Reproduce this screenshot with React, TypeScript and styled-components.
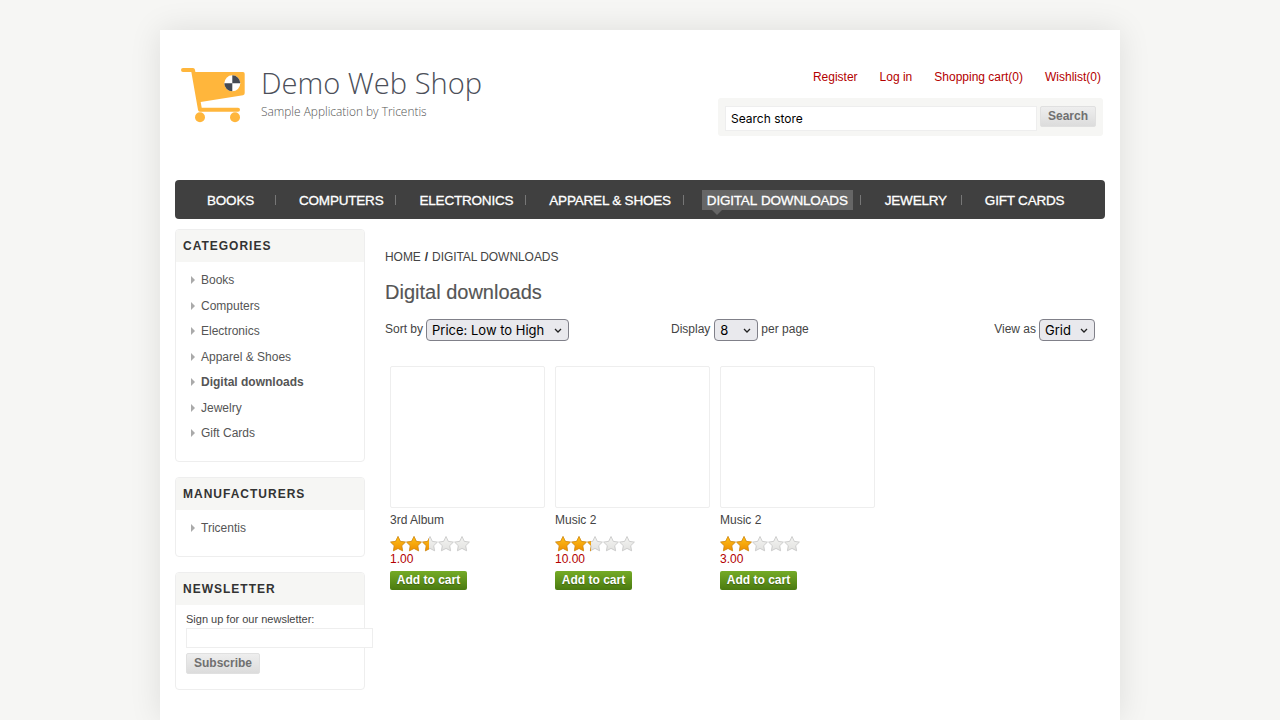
import React from "react";
import styled, { createGlobalStyle } from "styled-components";

const Global = createGlobalStyle`
  html, body { margin: 0; padding: 0; height: 100%; overflow: hidden; background: #f6f6f4; }
  body { font-family: "Liberation Sans", Arial, sans-serif; font-size: 12px; color: #444; }
  * { box-sizing: border-box; }
`;

const Master = styled.div`
  width: 960px;
  height: 690px;
  margin: 30px auto 0;
  padding: 0 15px;
  background: #fff;
  box-shadow: 0 0 30px rgba(0, 0, 0, 0.1);
`;

const Header = styled.header`
  height: 150px;
  display: flex;
  justify-content: space-between;
`;

const LogoLink = styled.a`
  display: flex;
  align-items: flex-start;
  padding: 36px 0 0 5px;
  gap: 13px;
`;

const LogoTextBox = styled.div`
  display: flex;
  flex-direction: column;
`;

const LogoName = styled.span`
  font-family: "Open Sans", sans-serif;
  font-weight: 300;
  font-size: 29.1px;
  line-height: 34px;
  color: #4c4f59;
`;

const LogoTagline = styled.span`
  font-family: "Open Sans", sans-serif;
  font-weight: 300;
  font-size: 11.9px;
  line-height: 16px;
  margin-top: 3px;
  color: #555;
`;

const HeaderRight = styled.div`
  width: 385px;
  margin-right: 2px;
  padding-top: 40px;
  display: flex;
  flex-direction: column;
  align-items: flex-end;
`;

const HeaderLinks = styled.div`
  display: flex;
  gap: 22px;
  height: 14px;
  line-height: 14px;
  margin-right: 2px;
`;

const HeaderLink = styled.a`
  color: #b40000;
  font-size: 12px;
`;

const SearchBar = styled.div`
  width: 385px;
  height: 38px;
  margin-top: 14px;
  padding: 8px 7px;
  display: flex;
  align-items: flex-start;
  gap: 3px;
  border-radius: 3px;
  background: #f6f6f4;
`;

const SearchInput = styled.input`
  width: 312px;
  height: 25px;
  padding: 0 5px;
  border: 1px solid #eee;
  background: #fff;
  font-family: Inter, sans-serif;
  font-size: 12px;
  color: #000;
  outline: none;
  &::placeholder { color: #000; opacity: 1; }
`;

const GreyButton = styled.button<{ $w: number }>`
  width: ${(p) => p.$w}px;
  height: 21px;
  padding: 0 0 2px;
  border: 1px solid #e0e0e0;
  border-radius: 2px;
  background: linear-gradient(#eeeeee, #dcdcdc);
  font-family: "Liberation Sans", sans-serif;
  font-size: 12px;
  font-weight: 700;
  color: #707070;
`;

const Nav = styled.nav`
  height: 39px;
  display: flex;
  align-items: center;
  padding-left: 8px;
  border-radius: 4px;
  background: #404040;
`;

const NavItem = styled.div<{ $pl?: number; $pr?: number; $last?: boolean }>`
  position: relative;
  display: flex;
  align-items: center;
  height: 20px;
  padding: 0 ${(p) => p.$pr ?? 12}px 0 ${(p) => p.$pl ?? 24}px;
  &::after {
    content: "";
    display: ${(p) => (p.$last ? "none" : "block")};
    position: absolute;
    right: -1px;
    top: 5px;
    width: 1px;
    height: 10px;
    background: #777;
  }
`;

const NavLink = styled.a<{ $active?: boolean }>`
  position: relative;
  display: block;
  height: 20px;
  line-height: 21px;
  padding: 0 5px;
  margin: 0 -5px;
  font-size: 13.5px;
  letter-spacing: -0.2px;
  word-spacing: ${(p) => (p.$active ? 1 : 0)}px;
  color: #fff;
  -webkit-text-stroke: 0.3px #fff;
  background: ${(p) => (p.$active ? "#666" : "transparent")};
  &::after {
    content: "";
    display: ${(p) => (p.$active ? "block" : "none")};
    position: absolute;
    left: 10px;
    top: 20px;
    border: 5px solid transparent;
    border-top-color: #666;
    border-bottom: 0;
  }
`;

const Body = styled.div`
  display: flex;
  gap: 20px;
  margin-top: 10px;
`;

const Side = styled.aside`
  width: 190px;
  display: flex;
  flex-direction: column;
  gap: 15px;
`;

const Block = styled.section<{ $h: number }>`
  height: ${(p) => p.$h}px;
  border: 1px solid #eee;
  border-radius: 4px;
`;

const BlockTitle = styled.div`
  height: 32px;
  padding-left: 7px;
  line-height: 32px;
  background: #f6f6f4;
  font-size: 12px;
  font-weight: 700;
  letter-spacing: 1px;
  color: #333;
  border-radius: 3px 3px 0 0;
`;

const SideList = styled.ul`
  list-style: none;
  margin: 0;
  padding: 5.4px 0 0 15px;
`;

const SideItem = styled.li<{ $active?: boolean }>`
  display: flex;
  align-items: center;
  height: 25.5px;
  gap: 6px;
  font-size: 12px;
  color: #555;
  font-weight: ${(p) => (p.$active ? 700 : 400)};
  &::before {
    content: "";
    border-left: 4px solid #aaa;
    border-top: 4.5px solid transparent;
    border-bottom: 4.5px solid transparent;
  }
`;

const NewsBody = styled.div`
  padding: 7px 0 0 10px;
`;

const NewsLabel = styled.div`
  height: 14px;
  line-height: 14px;
  font-size: 11px;
  color: #444;
`;

const NewsInput = styled.input`
  display: block;
  width: 187px;
  height: 20px;
  margin: 2px 0 5px;
  border: 1px solid #eee;
  background: #fff;
  outline: none;
`;

const Main = styled.main`
  width: 720px;
  padding-top: 21px;
`;

const Crumb = styled.div`
  height: 14px;
  line-height: 14px;
  font-size: 12px;
  letter-spacing: -0.005em;
  color: #444;
  text-transform: uppercase;
  & b { font-weight: 700; font-size: 12px; color: #333; margin: 0 4px 0 4px; }
`;

const PageTitle = styled.h1`
  margin: 16px 0 0;
  height: 24px;
  line-height: 24px;
  font-size: 20px;
  font-weight: 400;
  color: #555;
  -webkit-text-stroke: 0.15px #555;
`;

const Filters = styled.div`
  display: grid;
  grid-template-columns: 286px 1fr auto;
  margin-top: 14px;
  height: 22px;
  padding-right: 10px;
`;

const Filter = styled.div`
  display: flex;
  align-items: center;
  gap: 3px;
  height: 22px;
  font-size: 12px;
  color: #444;
`;

const SelectWrap = styled.div<{ $w: number; $ml?: number }>`
  position: relative;
  align-self: flex-start;
  flex: none;
  width: ${(p) => p.$w}px;
  height: 22px;
  margin: 1px 0 -1px ${(p) => p.$ml ?? 0}px;
  & svg {
    position: absolute;
    right: 7px;
    top: 9px;
    pointer-events: none;
  }
`;

const Select = styled.select`
  appearance: none;
  display: block;
  width: 100%;
  height: 22px;
  padding: 0 0 0 5px;
  font-family: Inter, sans-serif;
  font-size: 13px;
  color: #000;
  background-color: #e9e9ed;
  border: 1px solid #808089;
  border-radius: 4px;
  outline: none;
`;

const Grid = styled.div`
  display: flex;
  gap: 10px;
  margin-top: 26px;
  padding-left: 5px;
`;

const Product = styled.article`
  width: 155px;
  display: flex;
  flex-direction: column;
  align-items: flex-start;
`;

const Picture = styled.div`
  width: 155px;
  height: 142px;
  border: 1px solid #eee;
  border-radius: 2px;
`;

const ProductTitle = styled.div`
  margin-top: 5px;
  height: 14px;
  line-height: 14px;
  font-size: 12px;
  color: #444;
`;

const RatingBox = styled.div`
  position: relative;
  width: 80px;
  height: 16px;
  margin-top: 9px;
`;

const RatingFill = styled.div`
  position: absolute;
  left: 0;
  top: 0;
  height: 16px;
  overflow: hidden;
`;

const Price = styled.div`
  height: 14px;
  line-height: 14px;
  font-size: 12px;
  color: #b40000;
`;

const CartButton = styled.button`
  width: 77px;
  height: 19px;
  margin-top: 5px;
  padding: 0 0 1px;
  border: 0;
  border-radius: 2px;
  background: linear-gradient(#75ab26, #4a7a10);
  font-family: "Liberation Sans", sans-serif;
  font-size: 12px;
  font-weight: 700;
  color: #fff;
  text-shadow: 0 1px 1px rgba(0, 0, 0, 0.3);
`;

const STAR = "M8 .5 L10.3 5.35 L15.4 6.1 L11.7 9.7 L12.6 14.8 L8 12.4 L3.4 14.8 L4.3 9.7 L.6 6.1 L5.7 5.35 Z";

function StarRow({ gold }: { gold: boolean }) {
  return (
    <svg width="80" height="16" viewBox="0 0 80 16" style={{ display: "block" }}>
      <defs>
        <linearGradient id={gold ? "gs" : "gg"} x1="0" y1="0" x2="0" y2="1">
          <stop offset="0" stopColor={gold ? "#ffc21a" : "#f4f4f2"} />
          <stop offset="1" stopColor={gold ? "#ee8f00" : "#e2e2e0"} />
        </linearGradient>
      </defs>
      {[0, 16, 32, 48, 64].map((x) => (
        <path
          key={x}
          d={STAR}
          transform={`translate(${x} 0)`}
          fill={`url(#${gold ? "gs" : "gg"})`}
          stroke={gold ? "#d98a08" : "#c4c4c4"}
          strokeWidth="0.8"
          strokeLinejoin="round"
        />
      ))}
    </svg>
  );
}

function Rating({ value }: { value: number }) {
  return (
    <RatingBox>
      <StarRow gold={false} />
      <RatingFill style={{ width: `${value * 16}px` }}>
        <StarRow gold />
      </RatingFill>
    </RatingBox>
  );
}

function CartLogo() {
  return (
    <svg width="68" height="60" viewBox="0 0 68 60" style={{ display: "block" }}>
      <path d="M3 4 H13 L20 43.7 H58" fill="none" stroke="#ffb63c" strokeWidth="4" strokeLinecap="round" strokeLinejoin="round" />
      <path d="M13 6 H63 Q64.7 6 64.7 8 V27 Q64.7 29 63 29.3 L17.5 36.5 Z" fill="#ffb63c" />
      <circle cx="20" cy="51.3" r="5" fill="#ffb63c" />
      <circle cx="55" cy="51.3" r="5" fill="#ffb63c" />
      <circle cx="52.3" cy="17.3" r="8" fill="#fff" />
      <path d="M52.3 17.3 V9.3 A8 8 0 0 1 60.3 17.3 Z M52.3 17.3 V25.3 A8 8 0 0 1 44.3 17.3 Z" fill="#454a54" />
    </svg>
  );
}

function Chevron() {
  return (
    <svg width="8" height="5" viewBox="0 0 8 5">
      <path d="M1 1 L4 4 L7 1" fill="none" stroke="#222" strokeWidth="1.3" />
    </svg>
  );
}

const navItems = [
  { t: "BOOKS", pr: 21 },
  { t: "COMPUTERS" },
  { t: "ELECTRONICS" },
  { t: "APPAREL & SHOES" },
  { t: "DIGITAL DOWNLOADS", active: true },
  { t: "JEWELRY", pl: 25, pr: 14 },
  { t: "GIFT CARDS", last: true },
];

const cats = ["Books", "Computers", "Electronics", "Apparel & Shoes", "Digital downloads", "Jewelry", "Gift Cards"];

const products = [
  { t: "3rd Album", r: 2.45, p: "1.00" },
  { t: "Music 2", r: 2.25, p: "10.00" },
  { t: "Music 2", r: 2, p: "3.00" },
];

export default function App() {
  return (
    <Master>
      <Global />
      <Header>
        <LogoLink>
          <CartLogo />
          <LogoTextBox>
            <LogoName>Demo Web Shop</LogoName>
            <LogoTagline>Sample Application by Tricentis</LogoTagline>
          </LogoTextBox>
        </LogoLink>
        <HeaderRight>
          <HeaderLinks>
            <HeaderLink>Register</HeaderLink>
            <HeaderLink>Log in</HeaderLink>
            <HeaderLink>Shopping cart(0)</HeaderLink>
            <HeaderLink>Wishlist(0)</HeaderLink>
          </HeaderLinks>
          <SearchBar>
            <SearchInput placeholder="Search store" />
            <GreyButton $w={56}>Search</GreyButton>
          </SearchBar>
        </HeaderRight>
      </Header>
      <Nav>
        {navItems.map((n) => (
          <NavItem key={n.t} $pl={n.pl} $pr={n.pr} $last={n.last}>
            <NavLink $active={n.active}>{n.t}</NavLink>
          </NavItem>
        ))}
      </Nav>
      <Body>
        <Side>
          <Block $h={233}>
            <BlockTitle>CATEGORIES</BlockTitle>
            <SideList>
              {cats.map((c) => (
                <SideItem key={c} $active={c === "Digital downloads"}>{c}</SideItem>
              ))}
            </SideList>
          </Block>
          <Block $h={80}>
            <BlockTitle>MANUFACTURERS</BlockTitle>
            <SideList>
              <SideItem>Tricentis</SideItem>
            </SideList>
          </Block>
          <Block $h={118}>
            <BlockTitle>NEWSLETTER</BlockTitle>
            <NewsBody>
              <NewsLabel>Sign up for our newsletter:</NewsLabel>
              <NewsInput />
              <GreyButton $w={74}>Subscribe</GreyButton>
            </NewsBody>
          </Block>
        </Side>
        <Main>
          <Crumb>Home<b>/</b>Digital downloads</Crumb>
          <PageTitle>Digital downloads</PageTitle>
          <Filters>
            <Filter>
              Sort by
              <SelectWrap $w={143}>
                <Select><option>Price: Low to High</option></Select>
                <Chevron />
              </SelectWrap>
            </Filter>
            <Filter>
              Display
              <SelectWrap $w={44} $ml={1}>
                <Select><option>8</option></Select>
                <Chevron />
              </SelectWrap>
              per page
            </Filter>
            <Filter>
              View as
              <SelectWrap $w={56}>
                <Select><option>Grid</option></Select>
                <Chevron />
              </SelectWrap>
            </Filter>
          </Filters>
          <Grid>
            {products.map((p, i) => (
              <Product key={i}>
                <Picture />
                <ProductTitle>{p.t}</ProductTitle>
                <Rating value={p.r} />
                <Price>{p.p}</Price>
                <CartButton>Add to cart</CartButton>
              </Product>
            ))}
          </Grid>
        </Main>
      </Body>
    </Master>
  );
}
